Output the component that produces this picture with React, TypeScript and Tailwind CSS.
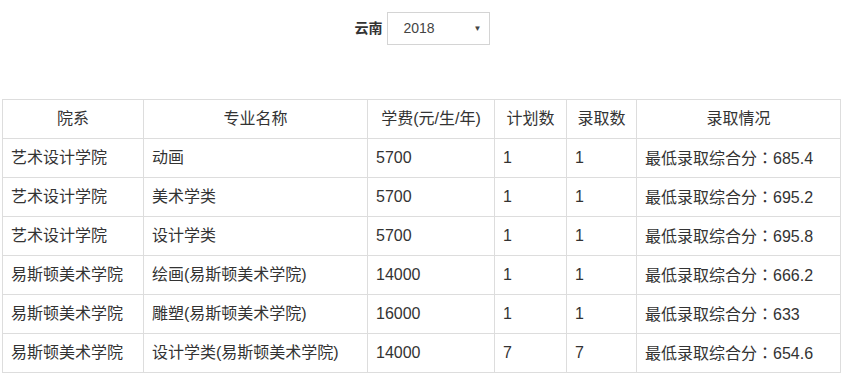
const rows = [
  ['艺术设计学院', '动画', '5700', '1', '1', '685.4'],
  ['艺术设计学院', '美术学类', '5700', '1', '1', '695.2'],
  ['艺术设计学院', '设计学类', '5700', '1', '1', '695.8'],
  ['易斯顿美术学院', '绘画(易斯顿美术学院)', '14000', '1', '1', '666.2'],
  ['易斯顿美术学院', '雕塑(易斯顿美术学院)', '16000', '1', '1', '633'],
  ['易斯顿美术学院', '设计学类(易斯顿美术学院)', '14000', '7', '7', '654.6'],
];

const heads = ['院系', '专业名称', '学费(元/生/年)', '计划数', '录取数', '录取情况'];

const cell = 'h-[39px] whitespace-nowrap border border-[#ddd] px-[8px] text-left align-middle leading-[22px] text-[#333]';

export default function App() {
  return (
    <div className="min-h-[375px] bg-white pt-[12px] font-['Liberation_Sans','Noto_Sans_CJK_SC',sans-serif] text-[#333]">
      {/* Province / year picker */}
      <div className="flex items-center justify-center gap-[4px]">
        <span className="text-[14px] font-bold text-[#333]">云南</span>
        <div className="flex h-[33px] w-[103px] items-center justify-between border border-[#d4d4d4] bg-white pl-[16px] pr-[7px]">
          <span className="text-[14px] text-[#444]">2018</span>
          <span className="text-[8px] text-[#444]">▼</span>
        </div>
      </div>

      {/* Admission table */}
      <table className="mx-[2px] mt-[54px] w-[838px] table-fixed border-collapse text-[16px]">
        <colgroup>
          <col className="w-[141px]" />
          <col className="w-[224px]" />
          <col className="w-[127px]" />
          <col className="w-[72px]" />
          <col className="w-[70px]" />
          <col className="w-[204px]" />
        </colgroup>
        <thead>
          <tr>
            {heads.map(h => (
              <th
                key={h}
                className="h-[39px] border border-[#ddd] px-[8px] text-center align-middle font-normal leading-[22px] text-[#333]"
              >
                {h}
              </th>
            ))}
          </tr>
        </thead>
        <tbody>
          {rows.map((r, i) => (
            <tr key={i}>
              {r.slice(0, 5).map((c, j) => (
                <td key={j} className={cell}>
                  {c}
                </td>
              ))}
              <td className={cell}>
                最低录取综合分
                <span className="font-['Noto_Sans_CJK_TC',sans-serif]">：</span>
                {r[5]}
              </td>
            </tr>
          ))}
        </tbody>
      </table>
    </div>
  );
}
